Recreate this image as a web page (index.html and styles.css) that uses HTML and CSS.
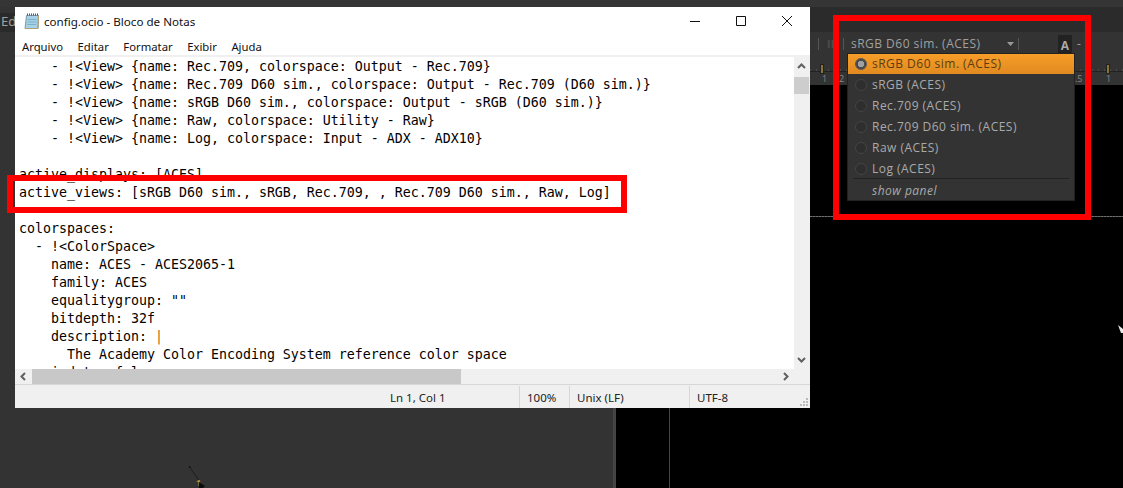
FILE: index.html
```html
<!DOCTYPE html>
<html lang="pt">
<head>
<meta charset="utf-8">
<title>config.ocio - Bloco de Notas</title>
<link rel="stylesheet" href="styles.css">
</head>
<body>
<div class="desktop">
  <div class="app-top"></div>
  <div class="app-edit">Ed</div>

  <div class="viewer-tabs"></div>
  <div class="viewer-toolbar">
    <span class="tb-sep tb-sep-a"></span>
    <span class="tb-ip">IP</span>
    <span class="tb-sep"></span>
    <span class="tb-view">sRGB D60 sim. (ACES)</span>
    <svg class="tb-caret" width="7" height="4" viewBox="0 0 7 4"><path d="M0 0h7L3.500 4z"/></svg>
    <span class="tb-sep"></span>
    <span class="tb-a">A</span>
    <span class="tb-dash">-</span>
  </div>
  <div class="viewer-ruler">
    <span class="ruler-line"></span>
    <span class="marker marker-l"></span>
    <span class="marker marker-r"></span>
    <span class="ruler-num num-a">1</span>
    <span class="ruler-num num-b">2</span>
    <span class="ruler-num num-c">.5</span>
    <span class="ruler-num num-d">1</span>
  </div>
  <div class="viewer-canvas">
    <div class="canvas-line"></div>
    <div class="canvas-vline"></div>
    <div class="canvas-edge"></div>
    <svg class="canvas-tick" width="5" height="8" viewBox="0 0 5 8"><path d="M0 0l5 4v4H3z" fill="#e8e8e8"/></svg>
  </div>
  <div class="node-link"></div>
  <div class="node-num">1</div>
  <svg class="node-arrow" width="6" height="6" viewBox="0 0 6 6"><path d="M0 0l6 4-2 2H0z" fill="#0c0c0c"/></svg>

  <section class="notepad">
    <header class="np-title">
      <svg class="np-icon" width="16" height="17" viewBox="0 0 16 17">
        <path d="M2.500 2.500h12l-.5 13H1z" fill="#a5d2e6" stroke="#7f97a6"/>
        <path d="M1 15.500h13l.5-13" fill="none" stroke="#b59f74"/>
        <path d="M3.500 6.500h9M3.500 9h9M3 11.500h9" stroke="#7fb0c8"/>
        <path d="M3 1.500h11" stroke="#555" stroke-dasharray="1 1" stroke-width="2"/>
      </svg>
      <span class="np-name">config.ocio - Bloco de Notas</span>
      <div class="np-controls">
        <svg class="np-ctl" width="46" height="16" viewBox="0 0 46 16"><path d="M18 8.500h10" stroke="#111" fill="none"/></svg>
        <svg class="np-ctl" width="46" height="16" viewBox="0 0 46 16"><path d="M18.500 3.500h9v9h-9z" stroke="#111" fill="none"/></svg>
        <svg class="np-ctl" width="46" height="16" viewBox="0 0 46 16"><path d="M18 3l10 10M28 3L18 13" stroke="#111" fill="none"/></svg>
      </div>
    </header>
    <nav class="np-menu">
      <span>Arquivo</span><span>Editar</span><span>Formatar</span><span>Exibir</span><span>Ajuda</span>
    </nav>
    <div class="np-body">
      <div class="np-rows">
        <pre class="np-text">    - !&lt;View&gt; {name: Rec.709, colorspace: Output - Rec.709}
    - !&lt;View&gt; {name: Rec.709 D60 sim., colorspace: Output - Rec.709 (D60 sim.)}
    - !&lt;View&gt; {name: sRGB D60 sim., colorspace: Output - sRGB (D60 sim.)}
    - !&lt;View&gt; {name: Raw, colorspace: Utility - Raw}
    - !&lt;View&gt; {name: Log, colorspace: Input - ADX - ADX10}

active_displays: [ACES]
active_views: [sRGB D60 sim., sRGB, Rec.709, , Rec.709 D60 sim., Raw, Log]

colorspaces:
  - !&lt;ColorSpace&gt;
    name: ACES - ACES2065-1
    family: ACES
    equalitygroup: ""
    bitdepth: 32f
    description: <span class="np-pipe">|</span>
      The Academy Color Encoding System reference color space
    isdata: false</pre>
        <div class="vbar">
          <svg class="vbar-up" width="15" height="18" viewBox="0 0 15 18"><path d="M4 11l3.500-3.500L11 11" stroke="#606060" stroke-width="2" fill="none"/></svg>
          <div class="vbar-thumb"></div>
          <svg class="vbar-down" width="15" height="18" viewBox="0 0 15 18"><path d="M4 7l3.500 3.500L11 7" stroke="#606060" stroke-width="2" fill="none"/></svg>
        </div>
      </div>
      <div class="hbar">
        <svg width="17" height="15" viewBox="0 0 17 15"><path d="M10 4L6.500 7.500 10 11" stroke="#606060" stroke-width="2" fill="none"/></svg>
        <div class="hbar-thumb"></div>
        <svg class="hbar-right" width="17" height="15" viewBox="0 0 17 15"><path d="M7 4l3.500 3.500L7 11" stroke="#606060" stroke-width="2" fill="none"/></svg>
      </div>
    </div>
    <footer class="np-status">
      <span class="st st-pos">Ln 1, Col 1</span>
      <span class="st st-zoom">100%</span>
      <span class="st st-eol">Unix (LF)</span>
      <span class="st st-enc">UTF-8</span>
      <svg class="np-grip" width="9" height="9" viewBox="0 0 9 9"><path d="M6 0h2v2H6zM3 3h2v2H3zM6 3h2v2H6zM0 6h2v2H0zM3 6h2v2H3zM6 6h2v2H6z" fill="#bbb"/></svg>
    </footer>
  </section>

  <div class="view-menu">
    <div class="vm-row vm-active"><span class="radio radio-on"></span>sRGB D60 sim. (ACES)</div>
    <div class="vm-row"><span class="radio"></span>sRGB (ACES)</div>
    <div class="vm-row"><span class="radio"></span>Rec.709 (ACES)</div>
    <div class="vm-row"><span class="radio"></span>Rec.709 D60 sim. (ACES)</div>
    <div class="vm-row"><span class="radio"></span>Raw (ACES)</div>
    <div class="vm-row"><span class="radio"></span>Log (ACES)</div>
    <div class="vm-foot">show panel</div>
  </div>

  <div class="red-box red-line"></div>
  <div class="red-box red-menu"></div>
</div>
</body>
</html>
```
FILE: styles.css
```css
* { box-sizing: border-box; }
html, body { margin: 0; height: 100%; overflow: hidden; }
.desktop { position: relative; width: 1123px; height: 488px; background: #333; overflow: hidden; font-family: "Noto Sans", sans-serif; }

.app-top { position: absolute; left: 0; top: 0; width: 100%; height: 7px; background: #353535; }
.app-edit { position: absolute; left: 0; top: 13px; width: 15px; height: 19px; padding-left: 1px; background: #2a2a2a; color: #a0a0a0; font-size: 13px; line-height: 17px; overflow: hidden; }

.viewer-tabs { position: absolute; left: 810px; top: 7px; width: 313px; height: 25px; background: #2b2b2b; }
.viewer-toolbar { position: absolute; left: 810px; top: 32px; width: 313px; height: 23px; background: #333; display: flex; align-items: center; color: #a0a0a0; font-family: "Open Sans", sans-serif; font-size: 12px; }
.tb-sep { width: 1px; height: 12px; background: #555; flex: none; }
.tb-sep-a { margin-left: 8px; }
.tb-ip { width: 8px; margin: 0 8px 0 8px; color: #4c4c4c; font-size: 11px; font-weight: 700; }
.tb-view { margin-left: 7px; width: 156px; letter-spacing: .48px; white-space: nowrap; flex: none; }
.tb-caret { fill: #999; margin-right: 4px; flex: none; }
.tb-a { margin-left: 39px; width: 14px; height: 18px; align-self: flex-start; margin-top: 3px; background: #222; color: #aaa; font-weight: 700; text-align: center; line-height: 21px; flex: none; }
.tb-dash { margin-left: 5px; }
.viewer-ruler { position: absolute; left: 810px; top: 55px; width: 313px; height: 30px; background: #333; }
.ruler-line { position: absolute; left: 0; right: 0; top: 14px; height: 3px; border-bottom: 1px solid #222; background: repeating-linear-gradient(90deg, #4a4a4a 0 1px, transparent 1px 6px); }
.marker { position: absolute; top: 9px; width: 4px; height: 10px; background: #8a7434; border: 1px solid #222; }
.marker-l { left: 10px; }
.marker-r { left: 296px; }
.ruler-num { position: absolute; top: 18px; font-family: "Open Sans", sans-serif; font-size: 9px; line-height: 11px; color: #888; }
.num-a { left: 12px; }
.num-b { left: 29px; }
.num-c { left: 265px; }
.num-d { left: 296px; }
.viewer-canvas { position: absolute; left: 613px; top: 85px; right: 0; bottom: 0; background: #000; }
.canvas-line { position: absolute; left: 197px; right: 0; top: 131px; height: 1px; background: repeating-linear-gradient(90deg, #707070 0 2px, #484848 2px 3px); }
.canvas-vline { position: absolute; left: 56px; top: 0; bottom: 0; width: 1px; background: #444; }
.canvas-edge { position: absolute; left: 0; top: 0; bottom: 0; width: 3px; background: #444; }
.canvas-tick { position: absolute; right: 0; top: 240px; display: block; }
.node-link { position: absolute; left: 194px; top: 465px; width: 1px; height: 18px; border-left: 1px dotted #111; transform: rotate(-35deg); }
.node-num { position: absolute; left: 196px; top: 478px; color: #c98a3a; font-size: 9px; font-weight: 700; line-height: 10px; }
.node-arrow { position: absolute; left: 199px; top: 482px; display: block; }

.notepad { position: absolute; left: 15px; top: 7px; width: 795px; height: 401px; background: #fff; display: flex; flex-direction: column; color: #000; }
.np-title { display: flex; align-items: center; height: 30px; padding: 0 0 2px 9px; flex: none; }
.np-icon { flex: none; }
.np-name { margin-left: 4px; font-size: 11.600px; color: #111; }
.np-controls { margin-left: auto; display: flex; }
.np-ctl { display: block; width: 46px; }
.np-menu { display: flex; gap: 14.500px; height: 18px; padding-left: 7px; flex: none; font-size: 11.300px; line-height: 19px; color: #111; }
.np-body { flex: none; height: 329px; border-top: 2px solid #f0f0f0; display: flex; flex-direction: column; }
.np-rows { display: flex; height: 312px; }
.np-text { flex: 1; margin: 0; padding: 1px 4px 0; overflow: hidden; font-family: "DejaVu Sans Mono", monospace; font-size: 13.290px; line-height: 18px; color: #000; }
.np-pipe { color: #b5650f; }
.vbar { width: 16px; background: #f0f0f0; display: flex; flex-direction: column; }
.vbar-up { margin-bottom: 2px; flex: none; }
.vbar-thumb { width: 15px; height: 17px; background: #cdcdcd; }
.vbar-down { margin-top: auto; flex: none; }
.hbar { display: flex; height: 15px; background: #f0f0f0; padding-right: 16px; }
.hbar-thumb { width: 429px; background: #c8c8c8; }
.hbar-right { margin-left: auto; }
.np-status { flex: none; height: 24px; background: #f0f0f0; border-top: 1px solid #d7d7d7; position: relative; display: flex; font-size: 11.500px; line-height: 23px; color: #222; }
.st { border-left: 1px solid #d7d7d7; padding-left: 7px; height: 22px; margin-top: 1px; }
.st-pos { margin-left: 368px; width: 136px; border-left: 0; }
.st-zoom { width: 50px; }
.st-eol { width: 120px; }
.st-enc { flex: 1; }
.np-grip { position: absolute; right: 1px; bottom: 1px; display: block; }

.view-menu { position: absolute; left: 847px; top: 53px; width: 228px; height: 148px; background: #333; border: 1px solid #222; color: #aaa; font-family: "Open Sans", sans-serif; font-size: 12px; letter-spacing: .48px; }
.vm-row { display: flex; align-items: center; height: 21px; padding-left: 7px; white-space: nowrap; }
.vm-active { height: 20px; padding-bottom: 1px; background: linear-gradient(#f79d28, #e08a20); color: #5c3d14; }
.radio { width: 12px; height: 12px; margin-right: 5px; border-radius: 50%; background: #2e2e2e; border: 1px solid #444; flex: none; }
.radio-on { background: radial-gradient(circle, #a0a0a0 0 3px, #4a4a4a 3.500px); border-color: #555; }
.vm-foot { margin: -1px 5px 0; border-top: 1px solid #222; padding: 4px 0 0 19px; font-style: italic; line-height: 16px; color: #aaa; }

.red-box { position: absolute; border: 6px solid #f00; pointer-events: none; }
.red-line { left: 7px; top: 175px; width: 620px; height: 38px; }
.red-menu { left: 833px; top: 15px; width: 258px; height: 205px; }
```
